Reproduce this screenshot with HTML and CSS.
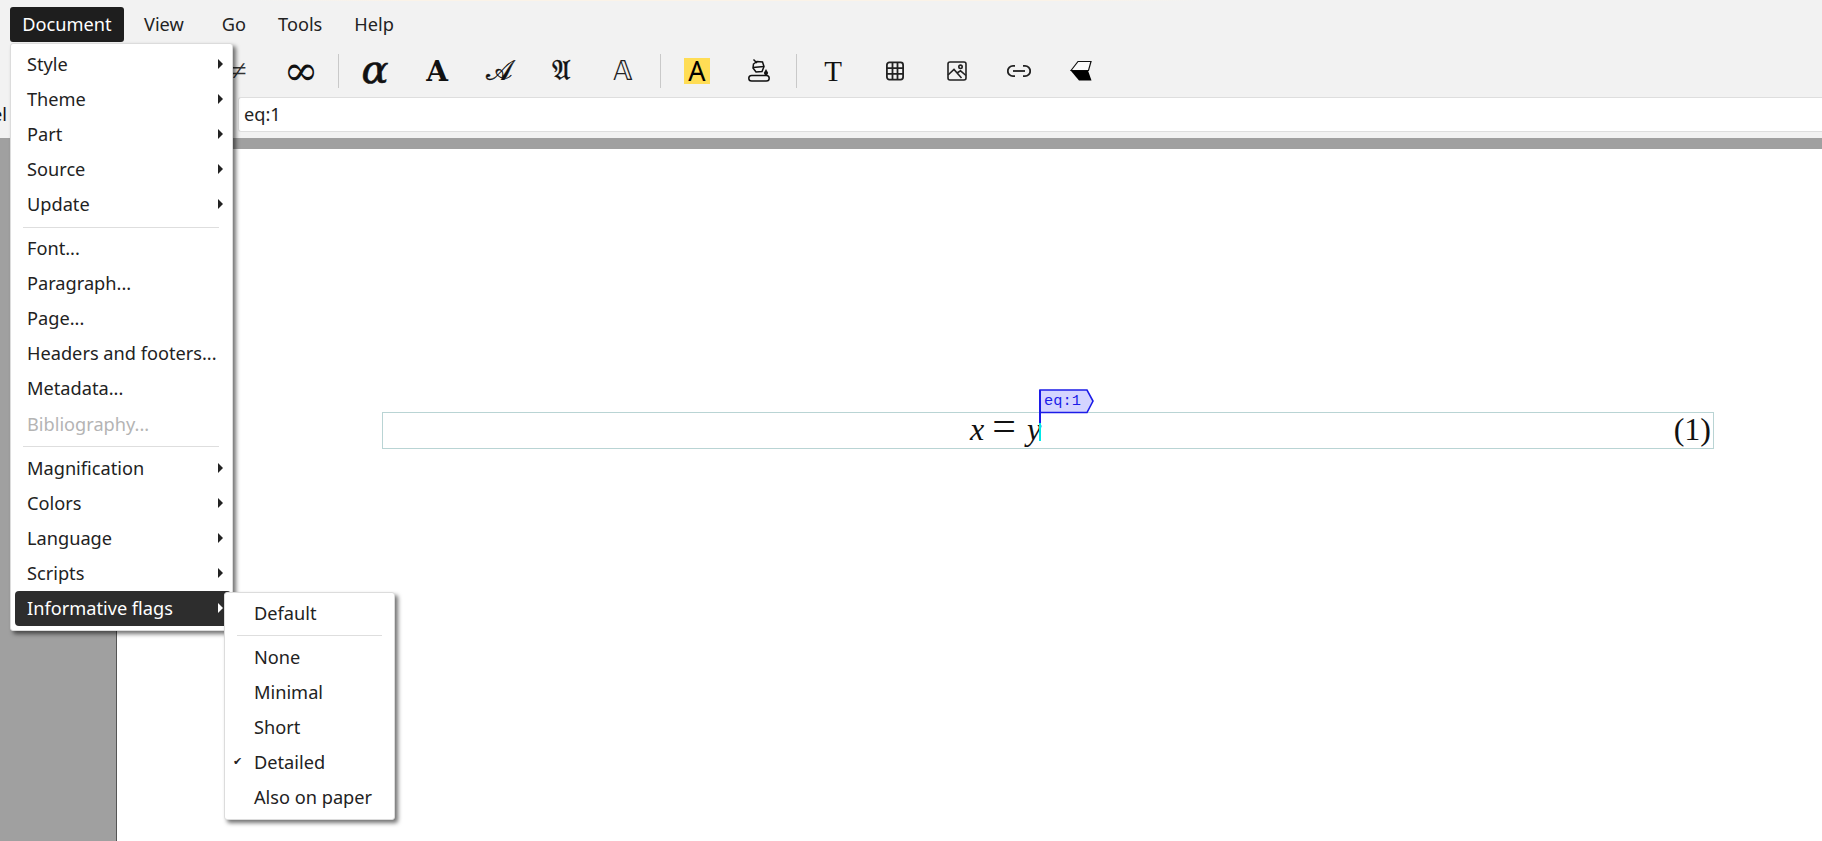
FILE: index.html
```html
<!DOCTYPE html>
<html lang="en">
<head>
<meta charset="utf-8">
<title>TeXmacs</title>
<link rel="stylesheet" href="styles.css">
</head>
<body>
<div class="app">
  <header class="chrome">
    <div class="top-tint"></div>
    <nav class="menubar">
      <span class="menubar-item is-open">Document</span>
      <span class="menubar-item view">View</span>
      <span class="menubar-item go">Go</span>
      <span class="menubar-item tools">Tools</span>
      <span class="menubar-item help">Help</span>
    </nav>
    <div class="toolbar">
      <span class="tool glyph-neq">≠</span>
      <span class="tool glyph-inf">∞</span>
      <span class="tool-sep"></span>
      <span class="tool glyph-alpha">α</span>
      <span class="tool glyph-bold">A</span>
      <span class="tool glyph-cal">𝒜</span>
      <span class="tool glyph-frak">𝔄</span>
      <span class="tool glyph-bb">𝔸</span>
      <span class="tool-sep"></span>
      <span class="tool"><span class="glyph-hl">A</span></span>
      <span class="tool">
        <svg width="26" height="26" viewBox="0 0 26 26" fill="none" stroke="#111" stroke-width="1.5">
          <rect x="2.8" y="17.5" width="20.4" height="5.6" rx="2.8"/>
          <path d="M7.5 6 L11 3.5 L16.5 4 L18 8.5 L16 13.5 L10 14 L7 10 Z"/>
          <path d="M7.5 1.5 L11 5"/>
          <path d="M7 9.5 L18 8.5"/>
          <path d="M20 11 L21.8 14.2 A2 2 0 1 1 18.2 14.2 Z" fill="#111" stroke="none"/>
        </svg>
      </span>
      <span class="tool-sep"></span>
      <span class="tool glyph-t">T</span>
      <span class="tool">
        <svg width="20" height="20" viewBox="0 0 20 20" fill="none" stroke="#222" stroke-width="1.8">
          <rect x="1.9" y="1.4" width="16.2" height="17.2" rx="2.5"/>
          <path d="M2 7.2H18M2 12.8H18M7.5 2V18M12.5 2V18"/>
        </svg>
      </span>
      <span class="tool">
        <svg width="20" height="20" viewBox="0 0 20 20" fill="none" stroke="#222" stroke-width="1.6">
          <rect x="1" y="1" width="18" height="18" rx="2"/>
          <circle cx="13.5" cy="5.8" r="1.7"/>
          <path d="M1 14 L7 8.5 L14.5 17 M10 12 L13.5 9.8 L19 14.5"/>
        </svg>
      </span>
      <span class="tool">
        <svg width="24" height="14" viewBox="0 0 24 14" fill="none" stroke="#222" stroke-width="1.8">
          <path d="M8 1.8 H6 A5.2 5.2 0 0 0 6 12.2 H8"/>
          <path d="M16 1.8 H18 A5.2 5.2 0 0 1 18 12.2 H16"/>
          <path d="M6 7 H18"/>
        </svg>
      </span>
      <span class="tool">
        <svg width="22" height="22" viewBox="0 0 22 22">
          <path d="M1 10.5 L8 1.5 H21 L18.5 10.5 Z" fill="#fafafa" stroke="#111" stroke-width="1.2"/>
          <path d="M0.6 10.5 H18 L21.5 20.5 H9 Z" fill="#000"/>
        </svg>
      </span>
    </div>
    <div class="label-row">
      <span class="field-label"><span>Label</span></span>
      <div class="field-input">eq:1</div>
    </div>
  </header>
  <div class="view-top"></div>
  <main class="workspace">
    <aside class="gutter"></aside>
    <section class="page">
      <div class="equation">
        <span class="formula"><i>x</i><span class="eq-sign">=</span><i>y</i><span class="cursor"></span><span class="flag"><svg class="flag-shape" width="56" height="25" viewBox="0 0 56 25"><path d="M1 1 H48 L54 12 L48 23.5 H1 Z" fill="#d4d4ff" stroke="#1c1ce8" stroke-width="1.6"/></svg><span class="flag-text">eq:1</span></span></span>
        <span class="eq-number">(1)</span>
      </div>
    </section>
  </main>

  <div class="menu doc-menu">
    <div class="item sub">Style</div>
    <div class="item sub">Theme</div>
    <div class="item sub">Part</div>
    <div class="item sub">Source</div>
    <div class="item sub">Update</div>
    <div class="sep"></div>
    <div class="item">Font...</div>
    <div class="item">Paragraph...</div>
    <div class="item">Page...</div>
    <div class="item">Headers and footers...</div>
    <div class="item">Metadata...</div>
    <div class="item is-disabled">Bibliography...</div>
    <div class="sep"></div>
    <div class="item sub">Magnification</div>
    <div class="item sub">Colors</div>
    <div class="item sub">Language</div>
    <div class="item sub">Scripts</div>
    <div class="item sub is-active">Informative flags</div>
  </div>

  <div class="menu flags-menu">
    <div class="item">Default</div>
    <div class="sep"></div>
    <div class="item">None</div>
    <div class="item">Minimal</div>
    <div class="item">Short</div>
    <div class="item is-checked">Detailed</div>
    <div class="item">Also on paper</div>
  </div>
</div>
</body>
</html>
```

FILE: styles.css
```css
* { box-sizing: border-box; }
html, body { margin: 0; height: 100%; overflow: hidden; }
body { font-family: "Noto Sans", "Open Sans", sans-serif; font-size: 18.2px; color: #222; background: #fff; }
.app { position: relative; display: flex; flex-direction: column; width: 1822px; height: 841px; overflow: hidden; }

.chrome { background: #f2f2f2; height: 138px; flex: none; }
.top-tint { height: 1px; background: linear-gradient(to right, #f2f2f2 14%, #fbf3e8 22%, #fbf3e8 58%, #f2f2f2 66%); }

.menubar { display: flex; align-items: center; height: 41px; padding: 6px 0 0 10px; }
.menubar-item { line-height: 35px; height: 35px; padding: 0 13px; }
.menubar-item.is-open { background: #1e1e1e; color: #fff; border-radius: 3px; width: 114px; text-align: center; padding: 0; }
.menubar-item.view { margin-left: 7px; }
.menubar-item.go { margin-left: 12px; }
.menubar-item.tools { margin-left: 6px; }
.menubar-item.help { margin-left: 6px; }

.toolbar { display: flex; align-items: center; height: 53px; margin-top: 2px; padding: 1px 0 0 208px; }
.tool { width: 62px; height: 34px; display: flex; align-items: center; justify-content: center; color: #111; line-height: 1; }
.tool-sep { width: 1px; height: 34px; background: #c9c9c9; margin: 0 5px 0 6px; }

.glyph-neq { font-family: "Liberation Serif", serif; font-size: 28px; color: #333; }
.glyph-inf { font-family: "DejaVu Serif", serif; font-size: 42px; }
.glyph-alpha { font-family: "DejaVu Serif", serif; font-size: 40px; font-style: italic; -webkit-text-stroke: 0.7px #111; padding-bottom: 4px; }
.glyph-bold { font-family: "DejaVu Serif", serif; font-size: 28px; font-weight: bold; padding-top: 2px; }
.glyph-cal { font-family: "DejaVu Serif", "DejaVu Sans", serif; font-size: 28px; -webkit-text-stroke: 0.4px #111; }
.glyph-frak { font-family: "DejaVu Serif", "DejaVu Sans", serif; font-size: 28px; -webkit-text-stroke: 0.4px #111; }
.glyph-bb { font-family: "DejaVu Sans", serif; font-size: 26px; color: #222; }
.glyph-hl { width: 26px; height: 26px; background: #ffdd55; color: #000; font-size: 27px; line-height: 26px; text-align: center; }
.glyph-t { font-family: "Liberation Serif", serif; font-size: 29px; }

.label-row { display: flex; align-items: stretch; height: 35px; }
.field-label { width: 7px; overflow: hidden; display: flex; justify-content: flex-end; line-height: 35px; color: #111; }
.field-input { flex: 1; margin-left: 231px; background: #fff; border: 1px solid #dedede; border-right: 0; border-radius: 3px 0 0 3px; padding-left: 5px; line-height: 32px; color: #222; }

.view-top { height: 11px; background: #a0a0a0; flex: none; }

.workspace { flex: 1; display: flex; min-height: 0; }
.gutter { width: 117px; background: #a0a0a0; border-right: 1px solid #555; flex: none; }
.page { flex: 1; background: #fff; padding: 263px 108px 0 265px; }

.equation { position: relative; display: flex; align-items: baseline; height: 37px; border: 1px solid #b9d4d4; font-family: "Liberation Serif", serif; font-size: 32px; color: #111; line-height: 27px; }
.formula { position: relative; margin-left: 587px; display: flex; align-items: baseline; height: 35px; }
.formula i { font-style: italic; }
.eq-sign { margin: 0 11px 0 8px; font-size: 42px; line-height: 27px; }
.eq-number { margin-left: auto; padding-right: 2px; font-size: 32px; }
.cursor { position: absolute; right: 0; top: 0; width: 2px; height: 28px; background: #00e8e8; }
.flag { position: absolute; left: 100%; bottom: 100%; margin-left: -2px; margin-bottom: -1px; width: 56px; height: 25px; line-height: 1; }
.flag-shape { display: block; }
.flag::before { content: ""; position: absolute; left: 0; top: 1px; width: 2px; height: 33px; background: #1c1ce8; }
.flag-text { position: absolute; left: 5px; top: 1px; font-family: "Liberation Mono", monospace; font-size: 15.3px; line-height: 23px; color: #1c1ce8; }

.menu { position: absolute; background: #fff; border: 1px solid #dcdcdc; border-radius: 3px; box-shadow: 3px 3px 4px rgba(0,0,0,.55); }
.doc-menu { left: 10px; top: 43px; width: 223px; padding: 3px 3px 4px 4px; }
.flags-menu { left: 224px; top: 592px; width: 171px; padding: 3px 0 4px; }
.item { position: relative; height: 35px; line-height: 34px; padding-left: 12px; white-space: nowrap; }
.flags-menu .item { padding-left: 29px; }
.sub::after { content: ""; position: absolute; right: 6px; top: 12px; border-left: 5.5px solid #222; border-top: 5px solid transparent; border-bottom: 5px solid transparent; }
.is-disabled { color: #b4b4b4; line-height: 36px; }
.is-active { background: #2d2d2d; color: #fff; border-radius: 4px; margin-right: -2px; }
.is-active::after { border-left-color: #fff; right: 8px; }
.is-checked::before { content: "✔"; position: absolute; left: 8px; top: 0; font-family: "DejaVu Sans", sans-serif; font-size: 11px; }
.sep { height: 1px; background: #dedede; margin: 4px 12px 4px 12px; }
.doc-menu .sep { margin: 5px 10px 3px 8px; }
.doc-menu .sep + .item + .item + .item + .item + .item + .item + .sep { margin-bottom: 4px; }
```
